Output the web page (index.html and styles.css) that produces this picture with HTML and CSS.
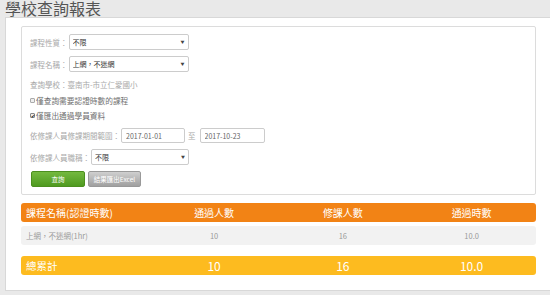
FILE: index.html
```html
<!DOCTYPE html>
<html lang="zh-Hant">
<head>
    <meta charset="UTF-8">
    <title>學校查詢報表</title>
    <link rel="stylesheet" href="styles.css">
</head>
<body>

<h1 class="page-title">學校查詢報表</h1>

<div class="panel">
    <!-- Query form -->
    <div class="form-box">
        <div class="form-row row-first">
            <span class="label">課程性質：</span>
            <span class="select-wrap w-120">
                <select><option>不限</option></select>
                <span class="arrow">▼</span>
            </span>
        </div>
        <div class="form-row row-gap6">
            <span class="label">課程名稱：</span>
            <span class="select-wrap w-120">
                <select><option>上網，不迷網</option></select>
                <span class="arrow">▼</span>
            </span>
        </div>
        <div class="form-row row-text">
            <span class="label">查詢學校：臺南市-市立仁愛國小</span>
        </div>
        <label class="check-row row-check1">
            <span class="box"></span>僅查詢需要認證時數的課程
        </label>
        <label class="check-row row-check2">
            <span class="box checked">✔</span>僅匯出通過學員資料
        </label>
        <div class="form-row row-date">
            <span class="label">依修課人員修課期間範圍：</span>
            <input class="date-input" type="text" value="2017-01-01">
            <span class="label to">至</span>
            <input class="date-input" type="text" value="2017-10-23">
        </div>
        <div class="form-row row-gap6">
            <span class="label">依修課人員職稱：</span>
            <span class="select-wrap w-98">
                <select><option>不限</option></select>
                <span class="arrow">▼</span>
            </span>
        </div>
        <div class="form-row row-buttons">
            <button class="btn btn-green">查詢</button>
            <button class="btn btn-gray">結果匯出Excel</button>
        </div>
    </div>

    <!-- Result table -->
    <div class="result">
        <div class="result-row result-head">
            <div class="cell first">課程名稱(認證時數)</div>
            <div class="cell">通過人數</div>
            <div class="cell">修課人數</div>
            <div class="cell">通過時數</div>
        </div>
        <div class="result-row result-body">
            <div class="cell first">上網，不迷網(1hr)</div>
            <div class="cell">10</div>
            <div class="cell">16</div>
            <div class="cell">10.0</div>
        </div>
        <div class="result-row result-total">
            <div class="cell first">總累計</div>
            <div class="cell">10</div>
            <div class="cell">16</div>
            <div class="cell">10.0</div>
        </div>
    </div>
</div>

</body>
</html>
```

FILE: styles.css
```css
/* General */
body {
    margin: 0;
    padding: 0;
    background-color: #e9e9e9;
    font-family: "Noto Sans CJK TC", "Noto Sans", sans-serif;
    color: #999;
}

.page-title {
    margin: 0;
    padding-left: 5px;
    height: 17px;
    font-size: 16px;
    line-height: 17px;
    font-weight: normal;
    color: #555;
}

/* Main panel */
.panel {
    margin-left: 5px;
    background-color: #fff;
    border: 1px solid #d8d8d8;
    border-right: none;
    padding: 8px 14px 15px 15px;
}

.form-box {
    border: 1px solid #dcdcdc;
    border-radius: 2px;
    padding: 7px 8px 7px 8px;
}

.form-row {
    display: flex;
    align-items: center;
}

.row-first { height: 16px; }
.row-gap6 { height: 16px; margin-top: 6px; }
.row-text { height: 12px; margin-top: 6px; }
.row-date { height: 15px; margin-top: 7px; }
.row-buttons { height: 16px; margin-top: 6px; gap: 3px; }

.label {
    font-size: 7.5px;
    color: #a8a8a8;
    white-space: nowrap;
}

.label.to {
    margin: 0 4px 0 3px;
}

/* Selects */
.select-wrap {
    position: relative;
    display: block;
    height: 16px;
}

.w-120 { width: 120px; margin-left: 1px; }
.w-98 { width: 98px; margin-left: 1px; }

.select-wrap select {
    appearance: none;
    -webkit-appearance: none;
    display: block;
    box-sizing: border-box;
    width: 100%;
    height: 16px;
    margin: 0;
    padding: 0 3px;
    border: 1px solid #ccc;
    border-radius: 2px;
    background: #fff;
    font-family: inherit;
    font-size: 7px;
    color: #333;
}

.select-wrap .arrow {
    position: absolute;
    right: 4px;
    top: 6px;
    font-size: 4px;
    color: #444;
    line-height: 5px;
}

/* Checkboxes */
.check-row {
    display: flex;
    align-items: center;
    height: 12px;
    font-size: 7.7px;
    color: #707070;
    white-space: nowrap;
}

.row-check1 { margin-top: 4px; }
.row-check2 { margin-top: 3px; }

.check-row .box {
    display: flex;
    align-items: center;
    justify-content: center;
    box-sizing: border-box;
    width: 5px;
    height: 5px;
    margin-right: 1px;
    border: 1px solid #aaa;
    border-radius: 1px;
    background: #eee;
    font-size: 5px;
    line-height: 5px;
    color: #222;
}

.check-row .box.checked {
    border-color: #888;
}

/* Date inputs */
.date-input {
    width: 64px;
    height: 15px;
    box-sizing: border-box;
    margin: 0 0 0 1px;
    padding: 0 4px;
    border: 1px solid #ccc;
    border-radius: 2px;
    font-family: inherit;
    font-size: 7px;
    color: #666;
}

.label.to + .date-input {
    margin-left: 0;
    width: 65px;
}

/* Buttons */
.btn {
    height: 16px;
    width: 54px;
    margin: 0;
    padding: 0;
    border-radius: 2px;
    font-family: inherit;
    font-size: 6.5px;
    color: #fff;
    cursor: pointer;
}

.btn-green {
    margin-left: 1px;
    border: 1px solid #4c8f1f;
    background: linear-gradient(#74b93f, #4f9a20);
}

.btn-gray {
    width: 53px;
    border: 1px solid #999;
    background: linear-gradient(#cfcfcf, #a0a0a0);
}

/* Result table */
.result {
    margin-top: 8px;
}

.result-row {
    display: grid;
    grid-template-columns: repeat(4, 1fr);
    align-items: center;
    height: 19px;
    border-radius: 3px;
}

.result .cell {
    text-align: center;
    white-space: nowrap;
}

.result .cell.first {
    text-align: left;
    padding-left: 5px;
}

.result-head {
    background-color: #f28315;
    color: #fff;
    font-size: 10px;
}

.result-body {
    margin-top: 4px;
    background-color: #f2f2f2;
    color: #999;
    font-size: 7.5px;
}

.result-total {
    margin-top: 11px;
    background-color: #fdbb1f;
    color: #fff;
    font-size: 11px;
}

.result-total .cell {
    font-size: 12px;
}

.result-total .cell.first {
    font-size: 10.5px;
}
```
